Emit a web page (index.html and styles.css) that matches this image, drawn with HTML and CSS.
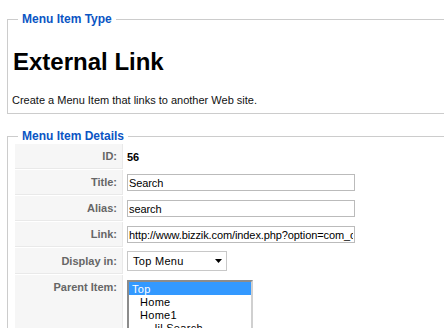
FILE: index.html
```html
<!DOCTYPE html>
<html lang="en">
<head>
    <meta charset="UTF-8">
    <title>Menu Item: [ Edit ]</title>
    <link rel="stylesheet" href="styles.css">
</head>
<body>
    <fieldset class="adminform type-box">
        <legend>Menu Item Type</legend>
        <h1 class="type-title">External Link</h1>
        <p class="type-desc">Create a Menu Item that links to another Web site.</p>
    </fieldset>

    <fieldset class="adminform details-box">
        <legend>Menu Item Details</legend>
        <table class="admintable">
            <tr>
                <td class="key">ID:</td>
                <td class="value"><strong>56</strong></td>
            </tr>
            <tr>
                <td class="key">Title:</td>
                <td class="value"><input class="inputbox" type="text" value="Search"></td>
            </tr>
            <tr>
                <td class="key">Alias:</td>
                <td class="value"><input class="inputbox" type="text" value="search"></td>
            </tr>
            <tr>
                <td class="key">Link:</td>
                <td class="value"><input class="inputbox" type="text" value="http://www.bizzik.com/index.php?option=com_content&amp;view=article"></td>
            </tr>
            <tr class="row-select">
                <td class="key">Display in:</td>
                <td class="value">
                    <div class="dropdown">
                        <span>Top Menu</span>
                        <svg width="7" height="4" viewBox="0 0 7 4"><polygon points="0,0 7,0 3.5,4" fill="#000"/></svg>
                    </div>
                </td>
            </tr>
            <tr class="row-list">
                <td class="key">Parent Item:</td>
                <td class="value">
                    <div class="listbox">
                        <div class="opt selected">Top</div>
                        <div class="opt sub">Home</div>
                        <div class="opt sub">Home1</div>
                        <div class="opt sub">- - lil Search</div>
                    </div>
                </td>
            </tr>
        </table>
    </fieldset>
</body>
</html>
```

FILE: styles.css
```css
html, body {
    margin: 0;
    padding: 0;
    width: 444px;
    height: 328px;
    overflow: hidden;
}
body {
    background: #fff;
    color: #222;
    font-family: 'Liberation Sans', Arial, sans-serif;
    font-size: 11px;
}
.adminform {
    width: 470px;
    margin: 12px 0 0 7px;
    padding: 0 4px 6px 4px;
    border: 1px solid #cccccc;
    border-right: none;
}
.adminform legend {
    margin-left: 6px;
    padding: 0 4px;
    font-size: 12px;
    line-height: 14px;
    font-weight: bold;
    color: #0b55c4;
}
.type-title {
    margin: 22px 0 0 1px;
    font-size: 24px;
    line-height: 28px;
    font-weight: bold;
    color: #000;
}
.type-desc {
    margin: 18px 0 0 0;
    line-height: 13px;
    color: #111;
}
.details-box {
    margin-top: 15px;
    padding-bottom: 0;
    height: 300px;
}
.admintable {
    margin-left: 2px;
    border-collapse: separate;
    border-spacing: 1px;
}
.admintable td {
    height: 25px;
    padding: 0;
    box-sizing: border-box;
}
.admintable td.key {
    width: 108px;
    padding: 0 5px 0 0;
    background: #f6f6f6;
    border-bottom: 1px solid #e9e9e9;
    border-right: 1px solid #e9e9e9;
    text-align: right;
    font-weight: bold;
    color: #666;
}
.admintable td.value {
    padding-left: 3px;
    color: #000;
}
.inputbox {
    display: block;
    width: 228px;
    height: 17px;
    box-sizing: border-box;
    margin: 0;
    padding: 0 1px;
    border: 1px solid #bbbbbb;
    font-family: 'Liberation Sans', Arial, sans-serif;
    font-size: 11px;
    letter-spacing: -0.1px;
    color: #000;
    background: #fff;
}
.row-select td {
    height: 26px;
}
.dropdown {
    width: 100px;
    height: 20px;
    box-sizing: border-box;
    border: 1px solid #c8c8c8;
    display: flex;
    align-items: center;
    justify-content: space-between;
    padding: 0 4px 0 5px;
    color: #000;
    letter-spacing: 0.3px;
}
.row-list td {
    vertical-align: top;
    height: 120px;
}
.row-list td.key {
    padding-top: 6px;
}
.row-list td.value {
    padding-top: 5px;
}
.listbox {
    width: 126px;
    height: 110px;
    box-sizing: border-box;
    border: 2px solid #8c8c8c;
    border-right-color: #d0d0d0;
    border-bottom-color: #d0d0d0;
    overflow: hidden;
    background: #fff;
}
.opt {
    height: 13px;
    line-height: 14px;
    padding-left: 3px;
    color: #000;
    letter-spacing: 0.3px;
    white-space: nowrap;
}
.opt.sub {
    padding-left: 11px;
}
.opt.selected {
    background: #3399ff;
    color: #fff;
}
```
